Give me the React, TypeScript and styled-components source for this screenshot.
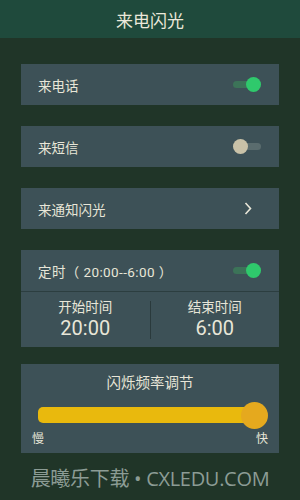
import styled, { createGlobalStyle } from "styled-components";

const GlobalStyle = createGlobalStyle`
  html, body {
    margin: 0;
    padding: 0;
    background: #203528;
  }
  body {
    font-family: Roboto, "Noto Sans CJK SC", sans-serif;
    font-variant-ligatures: none;
  }
`;

const Screen = styled.div`
  width: 300px;
  height: 500px;
  background: #203528;
  display: flex;
  flex-direction: column;
  overflow: hidden;
`;

const Header = styled.div`
  height: 38px;
  display: flex;
  align-items: center;
  justify-content: center;
  background: #1f4a3c;
  color: #ebe8da;
  font-size: 17px;
`;

const Content = styled.div`
  display: flex;
  flex-direction: column;
  padding: 26px 21px 0;
`;

const Card = styled.div<{ $gap?: number }>`
  background: #3d5157;
  margin-bottom: ${(p) => p.$gap ?? 21}px;
  display: flex;
  flex-direction: column;
`;

const Row = styled.div`
  height: 41px;
  display: flex;
  align-items: center;
  justify-content: space-between;
  padding: 0 17px;
  color: #e8e6d8;
  font-size: 13.5px;
`;

const Schedule = styled.span`
  letter-spacing: 0.4px;
`;

const Toggle = styled.div<{ $on: boolean }>`
  position: relative;
  width: 28px;
  height: 7px;
  border-radius: 4px;
  margin-right: 1px;
  background: ${(p) => (p.$on ? "#3c7358" : "#5a6c6e")};

  &::after {
    content: "";
    position: absolute;
    top: 50%;
    left: ${(p) => (p.$on ? "13px" : "0px")};
    width: 15px;
    height: 15px;
    margin-top: -7.5px;
    border-radius: 50%;
    background: ${(p) => (p.$on ? "#2fc96c" : "#c9c2a8")};
  }
`;

const Chevron = styled.svg`
  width: 8px;
  height: 13px;
  margin-right: 10px;
`;

const TimeRow = styled.div`
  height: 55px;
  display: grid;
  grid-template-columns: 1fr 1px 1fr;
  align-items: center;
  border-top: 1px solid #2c3e40;
`;

const Divider = styled.div`
  width: 1px;
  height: 38px;
  background: #2a3a3c;
`;

const TimeCell = styled.div`
  display: flex;
  flex-direction: column;
  align-items: center;
  color: #e8e6d8;
`;

const TimeLabel = styled.div`
  font-size: 13.5px;
  line-height: 16px;
`;

const TimeValue = styled.div`
  font-size: 20px;
  line-height: 24px;
  margin-top: 1px;
`;

const SliderCard = styled.div`
  background: #3d5157;
  height: 89px;
  display: flex;
  flex-direction: column;
  align-items: stretch;
  padding: 0 11px;
  box-sizing: border-box;
`;

const SliderTitle = styled.div`
  text-align: center;
  color: #e8e6d8;
  font-size: 14.5px;
  margin-top: 12px;
  line-height: 16px;
`;

const Track = styled.div`
  position: relative;
  height: 16px;
  margin: 15px 13px 0 6px;
  border-radius: 5px;
  background: #e9b90d;
`;

const Knob = styled.div`
  position: absolute;
  right: -13px;
  top: 50%;
  width: 27px;
  height: 27px;
  margin-top: -13.5px;
  border-radius: 50%;
  background: #e5a91e;
`;

const Labels = styled.div`
  display: flex;
  justify-content: space-between;
  color: #e8e6d8;
  font-size: 12px;
  line-height: 14px;
  margin-top: 9px;
`;

const Watermark = styled.div`
  margin-top: 10px;
  text-align: center;
  color: #8c9c95;
  font-size: 20px;
  font-family: "Open Sans", "Noto Sans CJK SC", sans-serif;
  letter-spacing: -0.3px;
`;

export default function App() {
  return (
    <Screen>
      <GlobalStyle />
      <Header>来电闪光</Header>
      <Content>
        <Card>
          <Row>
            <span>来电话</span>
            <Toggle $on />
          </Row>
        </Card>
        <Card>
          <Row>
            <span>来短信</span>
            <Toggle $on={false} />
          </Row>
        </Card>
        <Card>
          <Row>
            <span>来通知闪光</span>
            <Chevron viewBox="0 0 8 13">
              <path d="M1.5 1 L6.5 6.5 L1.5 12" fill="none" stroke="#e8e6d8" strokeWidth="1.6" />
            </Chevron>
          </Row>
        </Card>
        <Card $gap={17}>
          <Row>
            <Schedule>定时（ 20:00--6:00 ）</Schedule>
            <Toggle $on />
          </Row>
          <TimeRow>
            <TimeCell>
              <TimeLabel>开始时间</TimeLabel>
              <TimeValue>20:00</TimeValue>
            </TimeCell>
            <Divider />
            <TimeCell>
              <TimeLabel>结束时间</TimeLabel>
              <TimeValue>6:00</TimeValue>
            </TimeCell>
          </TimeRow>
        </Card>
        <SliderCard>
          <SliderTitle>闪烁频率调节</SliderTitle>
          <Track>
            <Knob />
          </Track>
          <Labels>
            <span>慢</span>
            <span>快</span>
          </Labels>
        </SliderCard>
      </Content>
      <Watermark>晨曦乐下载 • CXLEDU.COM</Watermark>
    </Screen>
  );
}
